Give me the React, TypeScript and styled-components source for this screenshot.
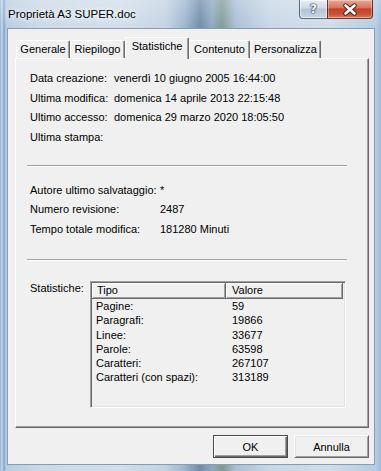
import React from 'react';
import styled, { createGlobalStyle } from 'styled-components';

const GlobalStyle = createGlobalStyle`
  html, body {
    margin: 0;
    padding: 0;
    overflow: hidden;
    background: #b9cde1;
  }
`;

// dialog data
const tabs = [
  { label: 'Generale', width: 54 },
  { label: 'Riepilogo', width: 55 },
  { label: 'Statistiche', width: 64, active: true },
  { label: 'Contenuto', width: 61 },
  { label: 'Personalizza', width: 71 }
];

const dates = [
  ['Data creazione:', 'venerdì 10 giugno 2005 16:44:00'],
  ['Ultima modifica:', 'domenica 14 aprile 2013 22:15:48'],
  ['Ultimo accesso:', 'domenica 29 marzo 2020 18:05:50'],
  ['Ultima stampa:', '']
];

const revisions = [
  ['Autore ultimo salvataggio:', '*'],
  ['Numero revisione:', '2487'],
  ['Tempo totale modifica:', '181280 Minuti']
];

const stats = [
  ['Pagine:', '59'],
  ['Paragrafi:', '19866'],
  ['Linee:', '33677'],
  ['Parole:', '63598'],
  ['Caratteri:', '267107'],
  ['Caratteri (con spazi):', '313189']
];

// Aero frame
const Frame = styled.div`
  width: 381px;
  height: 471px;
  box-sizing: border-box;
  padding: 0 6px 6px 7px;
  display: flex;
  flex-direction: column;
  font-family: 'Liberation Sans', Arial, sans-serif;
  font-size: 11px;
  color: #000;
  background:
    linear-gradient(180deg, rgba(255, 255, 255, 0.25) 0px, rgba(255, 255, 255, 0) 30px),
    linear-gradient(
      90deg,
      #8fb0d4 0px,
      #c9d9ea 2px,
      #7fa2c9 4px,
      #b8cde3 6px,
      #cbd9e7 40px,
      #d2deea 120px,
      #c3d3e3 165px,
      #9cb5cf 185px,
      #6f8ca8 200px,
      #8ea9c0 212px,
      #7d9a94 222px,
      #a9c0d6 236px,
      #c8d7e6 270px,
      #d0dce9 330px,
      #b4cbe2 376px,
      #9fbbd9 381px
    );
`;

const TitleBar = styled.div`
  height: 28px;
  flex: none;
  display: flex;
  align-items: flex-start;
  justify-content: space-between;
  padding: 0 1px;
`;

const TitleText = styled.div`
  font-size: 11.5px;
  line-height: 28px;
  color: #000;
  text-shadow: 0 0 5px #fff, 0 0 9px rgba(255, 255, 255, 0.9);
`;

const CaptionButtons = styled.div`
  display: flex;
  margin-right: 1px;
`;

const HelpButton = styled.div`
  width: 28px;
  height: 19px;
  box-sizing: border-box;
  border: 1px solid rgba(52, 66, 88, 0.75);
  border-top: none;
  border-right: none;
  border-radius: 0 0 0 4px;
  background: linear-gradient(180deg, #e6edf5 0%, #cfdae6 45%, #b3c4d6 50%, #c9d6e3 100%);
  box-shadow: inset 0 0 0 1px rgba(255, 255, 255, 0.55);
  display: flex;
  align-items: center;
  justify-content: center;
  font-family: 'DejaVu Sans', sans-serif;
  font-weight: bold;
  font-size: 12px;
  color: #f4f6f8;
  text-shadow: 0 0 1px #2a3442, 0 0 1px #2a3442, 0 0 2px #2a3442;
`;

const CloseButton = styled.div`
  width: 46px;
  height: 19px;
  box-sizing: border-box;
  border: 1px solid rgba(70, 30, 24, 0.8);
  border-top: none;
  border-radius: 0 0 4px 0;
  background: linear-gradient(180deg, #e8a898 0%, #d87560 42%, #c4412b 50%, #cb5236 80%, #d9805c 100%);
  box-shadow: inset 0 0 0 1px rgba(255, 255, 255, 0.35);
  display: flex;
  align-items: center;
  justify-content: center;
`;

// client area
const Client = styled.div`
  flex: 1;
  box-sizing: border-box;
  background: #f0f0f0;
  border: 1px solid #8a9bb0;
  padding: 8px 5px 6px 7px;
  display: flex;
  flex-direction: column;
`;

const TabStrip = styled.div`
  height: 21px;
  flex: none;
  display: flex;
  align-items: flex-end;
  padding-left: 1px;
  position: relative;
  z-index: 1;
`;

const Tab = styled.div<{ $active?: boolean; $width: number }>`
  width: ${({ $width }) => $width}px;
  height: ${({ $active }) => ($active ? 22 : 18)}px;
  margin-bottom: ${({ $active }) => ($active ? -1 : 0)}px;
  box-sizing: border-box;
  border-top: 1px solid #fff;
  border-left: 1px solid #fff;
  border-right: 1px solid #696969;
  border-radius: 2px 2px 0 0;
  box-shadow: inset -1px 0 0 #a0a0a0;
  background: #f0f0f0;
  text-align: center;
  line-height: 16px;
  white-space: nowrap;
`;

const Panel = styled.div`
  flex: 1;
  box-sizing: border-box;
  border-top: 1px solid #fff;
  border-left: 1px solid #fff;
  border-right: 1px solid #696969;
  border-bottom: 1px solid #696969;
  box-shadow: inset -1px -1px 0 #a0a0a0;
  background: #f0f0f0;
  padding: 9px 0 0 14px;
  display: flex;
  flex-direction: column;
`;

const InfoGrid = styled.div<{ $labelWidth: number; $rowHeight: number; $top: number }>`
  display: grid;
  grid-template-columns: ${({ $labelWidth }) => $labelWidth}px 1fr;
  grid-auto-rows: ${({ $rowHeight }) => $rowHeight}px;
  align-items: center;
  margin-top: ${({ $top }) => $top}px;
  white-space: nowrap;
`;

const Separator = styled.div<{ $top: number }>`
  width: 320px;
  margin: ${({ $top }) => $top}px 0 0 -3px;
  border-top: 1px solid #a0a0a0;
  border-bottom: 1px solid #fff;
`;

const StatsRow = styled.div`
  display: flex;
  margin-top: 20px;
`;

const StatsLabel = styled.div`
  width: 60px;
  line-height: 13px;
  padding-top: 1px;
`;

const ListBox = styled.div`
  width: 256px;
  height: 127px;
  box-sizing: border-box;
  border: 1px solid;
  border-color: #a0a0a0 #fff #fff #a0a0a0;
  box-shadow: inset 1px 1px 0 #696969, inset -1px -1px 0 #e3e3e3;
  padding: 1px;
  background: #f0f0f0;
`;

const ListHeader = styled.div`
  display: flex;
  height: 16px;
`;

const HeaderCell = styled.div<{ $width: number; $indent: number }>`
  width: ${({ $width }) => $width}px;
  box-sizing: border-box;
  border-right: 1px solid #696969;
  border-bottom: 1px solid #696969;
  box-shadow: inset 1px 1px 0 #fff, inset -1px -1px 0 #a0a0a0;
  padding-left: ${({ $indent }) => $indent}px;
  line-height: 15px;
`;

const ListRow = styled.div`
  display: grid;
  grid-template-columns: 134px 1fr;
  height: 14.2px;
  line-height: 14.2px;
  white-space: nowrap;
`;

const ListCell = styled.div<{ $indent: number }>`
  padding-left: ${({ $indent }) => $indent}px;
`;

const ButtonRow = styled.div`
  flex: none;
  display: flex;
  justify-content: flex-end;
  gap: 6px;
  margin-top: 7px;
`;

const DialogButton = styled.button<{ $default?: boolean }>`
  width: 75px;
  height: 23px;
  box-sizing: border-box;
  margin: 0;
  padding: 0;
  font-family: 'Liberation Sans', Arial, sans-serif;
  font-size: 11px;
  color: #000;
  background: #f0f0f0;
  border: 1px solid;
  border-color: ${({ $default }) => ($default ? '#4a4a4a' : '#fff #696969 #696969 #fff')};
  box-shadow: ${({ $default }) =>
    $default
      ? 'inset 1px 1px 0 #fff, inset -1px -1px 0 #696969, inset -2px -2px 0 #a0a0a0'
      : 'inset 1px 1px 0 #e3e3e3, inset -1px -1px 0 #a0a0a0'};
`;

const CloseGlyph = () => (
  <svg width="16" height="13" viewBox="0 0 16 13">
    <path d="M3.5 2.5 L12.5 10.5 M12.5 2.5 L3.5 10.5" stroke="#4a1e16" strokeWidth="4.4" strokeLinecap="round" />
    <path d="M3.5 2.5 L12.5 10.5 M12.5 2.5 L3.5 10.5" stroke="#fff" strokeWidth="2.6" strokeLinecap="round" />
  </svg>
);

const App: React.FC = () => (
  <>
    <GlobalStyle />
    <Frame>
      <TitleBar>
        <TitleText>Proprietà A3 SUPER.doc</TitleText>
        <CaptionButtons>
          <HelpButton>?</HelpButton>
          <CloseButton>
            <CloseGlyph />
          </CloseButton>
        </CaptionButtons>
      </TitleBar>

      <Client>
        <TabStrip>
          {tabs.map((tab) => (
            <Tab key={tab.label} $width={tab.width} $active={tab.active}>
              {tab.label}
            </Tab>
          ))}
        </TabStrip>

        <Panel>
          <InfoGrid $labelWidth={84} $rowHeight={19.7} $top={0}>
            {dates.map(([label, value]) => (
              <React.Fragment key={label}>
                <div>{label}</div>
                <div>{value}</div>
              </React.Fragment>
            ))}
          </InfoGrid>

          <Separator $top={18} />

          <InfoGrid $labelWidth={130} $rowHeight={19.5} $top={13}>
            {revisions.map(([label, value]) => (
              <React.Fragment key={label}>
                <div>{label}</div>
                <div>{value}</div>
              </React.Fragment>
            ))}
          </InfoGrid>

          <Separator $top={21} />

          <StatsRow>
            <StatsLabel>Statistiche:</StatsLabel>
            <ListBox>
              <ListHeader>
                <HeaderCell $width={134} $indent={5}>Tipo</HeaderCell>
                <HeaderCell $width={117} $indent={6}>Valore</HeaderCell>
              </ListHeader>
              {stats.map(([label, value]) => (
                <ListRow key={label}>
                  <ListCell $indent={4}>{label}</ListCell>
                  <ListCell $indent={6}>{value}</ListCell>
                </ListRow>
              ))}
            </ListBox>
          </StatsRow>
        </Panel>

        <ButtonRow>
          <DialogButton $default>OK</DialogButton>
          <DialogButton>Annulla</DialogButton>
        </ButtonRow>
      </Client>
    </Frame>
  </>
);

export default App;
